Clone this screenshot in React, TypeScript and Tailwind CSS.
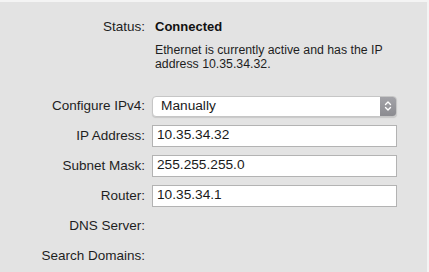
import React from 'react';

const font = { fontFamily: '"Liberation Sans", Arial, sans-serif' };

function Label({ children }: { children: React.ReactNode }) {
  return <div className="text-right text-[13.5px] text-[#1e1e1e] leading-none">{children}</div>;
}

function Field({ value }: { value: string }) {
  return (
    <div className="h-[22px] w-[245px] border border-[#b3b3b3] bg-white flex items-center pl-[4px] text-[13.7px] text-[#1a1a1a]">
      {value}
    </div>
  );
}

function Popup({ value }: { value: string }) {
  return (
    <div className="h-[21px] w-[245px] rounded-[4px] border border-[#c6c6c6] bg-white shadow-[0_1px_1px_rgba(0,0,0,0.12)] flex items-center overflow-hidden">
      <span className="flex-1 pl-[8px] text-[13.7px] text-[#1a1a1a]">{value}</span>
      <div className="h-full w-[16px] bg-gradient-to-b from-[#a3a3a8] to-[#8c8c91] flex items-center justify-center">
        <svg width="8" height="12" viewBox="0 0 8 12" fill="none" stroke="white" strokeWidth="1.4" strokeLinecap="round" strokeLinejoin="round">
          <path d="M1.5 4.5 L4 2 L6.5 4.5" />
          <path d="M1.5 7.5 L4 10 L6.5 7.5" />
        </svg>
      </div>
    </div>
  );
}

export default function App() {
  return (
    <div style={font} className="w-[429px] h-[272px] bg-[#e3e3e3] border-t-2 border-r-2 border-[#f4f4f4] overflow-hidden">
      <div className="grid grid-cols-[145px_245px] gap-x-[7px] pt-[17px]">
        <div className="pt-[1px]"><Label>Status:</Label></div>
        <div className="pl-[3px] text-[13px] font-bold text-[#111] leading-none pt-[1px]">Connected</div>

        <div />
        <div className="pl-[3px] pt-[9px] text-[12.3px] leading-[14px] text-[#1e1e1e]">
          Ethernet is currently active and has the IP
          <br />
          address 10.35.34.32.
        </div>

        <div className="self-center mt-[25px]"><Label>Configure IPv4:</Label></div>
        <div className="mt-[25px]"><Popup value="Manually" /></div>

        <div className="self-center mt-[8px]"><Label>IP Address:</Label></div>
        <div className="mt-[8px]"><Field value="10.35.34.32" /></div>

        <div className="self-center mt-[8px]"><Label>Subnet Mask:</Label></div>
        <div className="mt-[8px]"><Field value="255.255.255.0" /></div>

        <div className="self-center mt-[8px]"><Label>Router:</Label></div>
        <div className="mt-[8px]"><Field value="10.35.34.1" /></div>

        <div className="self-center h-[22px] flex items-center justify-end mt-[8px]"><Label>DNS Server:</Label></div>
        <div className="mt-[8px]" />

        <div className="self-center h-[22px] flex items-center justify-end mt-[8px]"><Label>Search Domains:</Label></div>
        <div className="mt-[8px]" />
      </div>
    </div>
  );
}
